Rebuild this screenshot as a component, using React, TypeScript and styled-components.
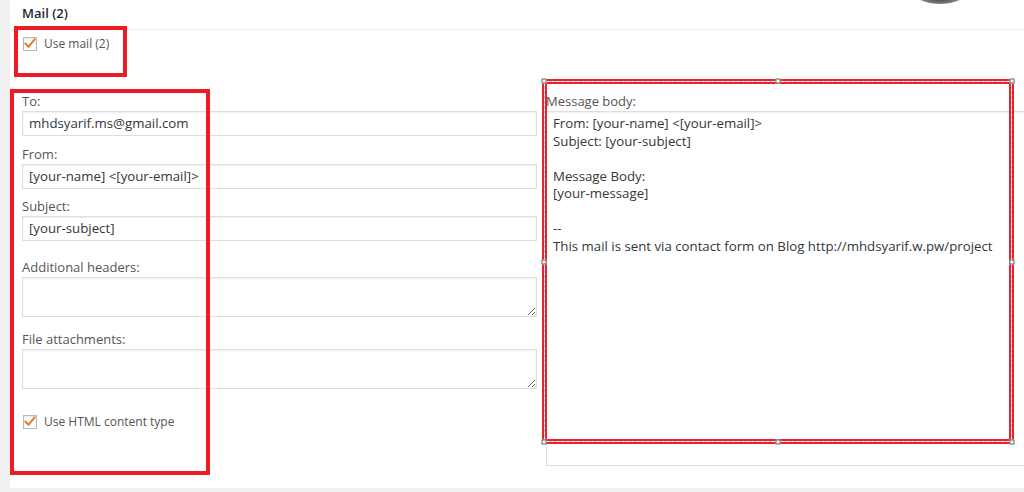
import React from "react";
import styled, { createGlobalStyle } from "styled-components";

const Global = createGlobalStyle`
  html, body { margin: 0; padding: 0; background: #f1f1f1; }
  body { width: 1024px; height: 492px; overflow: hidden; font-family: "Open Sans", "Liberation Sans", sans-serif; }
  * { box-sizing: border-box; }
`;

const Panel = styled.div`
  position: relative;
  margin-left: 10px;
  height: 488px;
  background: #fff;
  overflow: hidden;
`;

const Header = styled.h2`
  margin: 0;
  height: 30px;
  padding: 3px 0 0 12px;
  font-size: 13px;
  font-weight: 600;
  line-height: 20px;
  color: #23282d;
  border-bottom: 1px solid #eee;
`;

const Body = styled.div`
  padding: 7px 0 0 12px;
`;

const CheckRow = styled.label<{ $mt?: number }>`
  display: flex;
  align-items: center;
  gap: 7px;
  margin-top: ${(p) => p.$mt ?? 0}px;
  font-size: 12px;
  color: #555;
  line-height: 14px;
`;

const Box = styled.span`
  position: relative;
  width: 14px;
  height: 14px;
  border: 1px solid #b4b9be;
  background: #fff;
  box-shadow: inset 0 1px 2px rgba(0, 0, 0, 0.1);
  display: flex;
  align-items: center;
  justify-content: center;
  flex: none;
  margin-left: 1px;
`;

const Columns = styled.div`
  display: grid;
  grid-template-columns: 515px 1fr;
  column-gap: 9px;
  margin-top: 42px;
`;

const Col = styled.div`
  display: flex;
  flex-direction: column;
`;

const Field = styled.div<{ $mt?: number }>`
  display: flex;
  flex-direction: column;
  margin-top: ${(p) => p.$mt ?? 0}px;
`;

const Label = styled.span`
  display: block;
  font-size: 13px;
  line-height: 16px;
  color: #555;
  margin-bottom: 2px;
`;

const Input = styled.div`
  height: 25px;
  border: 1px solid #ddd;
  box-shadow: inset 0 1px 2px rgba(0, 0, 0, 0.07);
  padding: 0 6px;
  font-size: 13.25px;
  line-height: 22px;
  color: #32373c;
  white-space: nowrap;
`;

const Area = styled.textarea<{ $h: number }>`
  display: block;
  width: 100%;
  height: ${(p) => p.$h}px;
  margin: 0;
  border: 1px solid #ddd;
  box-shadow: inset 0 1px 2px rgba(0, 0, 0, 0.07);
  padding: 3px 6px;
  font-family: "Open Sans", "Liberation Sans", sans-serif;
  font-size: 13.25px;
  line-height: 17.5px;
  color: #32373c;
  resize: vertical;
  outline: none;
  background: #fff;
`;

const MessageArea = styled(Area)`
  width: calc(100% + 20px);
  resize: none;
  overflow: hidden;
`;

const RedBox = styled.div`
  position: absolute;
  border: 4px solid #ed1c24;
  pointer-events: none;
`;

const Selection = styled.div`
  position: absolute;
  left: 532px;
  top: 79px;
  width: 472px;
  height: 365px;
  border: 2px solid #e8232d;
  pointer-events: none;
`;

const SelDash = styled.div`
  position: absolute;
  inset: 0;
  border: 1px dashed #f7c3c6;
`;

const SelInner = styled.div`
  position: absolute;
  inset: 1px;
  border: 2px solid #e8232d;
`;

const Handle = styled.span`
  position: absolute;
  width: 5px;
  height: 5px;
  background: #fff;
  border: 1px solid #666;
  transform: translate(-50%, -50%);
`;

const Blob = styled.div`
  position: absolute;
  left: 903px;
  top: -22px;
  width: 54px;
  height: 26px;
  border-radius: 50%;
  background: radial-gradient(ellipse at 50% 40%, #3e3e3e 0%, #5a5a5a 55%, #aaa 85%, rgba(255,255,255,0) 100%);
`;

const Check = () => (
  <svg width="13" height="11" viewBox="0 0 13 11" style={{ marginTop: -2 }}>
    <path d="M1.5 5.5 L5 9 L11.5 1" fill="none" stroke="#e07a2e" strokeWidth="2.2" strokeLinecap="round" strokeLinejoin="round" />
  </svg>
);

const message = `From: [your-name] <[your-email]>
Subject: [your-subject]

Message Body:
[your-message]

--
This mail is sent via contact form on Blog http://mhdsyarif.w.pw/project`;

const handles: [string, string][] = [
  ["0%", "0%"], ["50%", "0%"], ["100%", "0%"],
  ["0%", "50%"], ["100%", "50%"],
  ["0%", "100%"], ["50%", "100%"], ["100%", "100%"],
];

export default function App() {
  return (
    <>
      <Global />
      <Panel>
        <Blob />
        <Header>Mail (2)</Header>
        <Body>
          <CheckRow>
            <Box><Check /></Box>
            Use mail (2)
          </CheckRow>
          <Columns>
            <Col>
              <Field>
                <Label>To:</Label>
                <Input>mhdsyarif.ms@gmail.com</Input>
              </Field>
              <Field $mt={10}>
                <Label>From:</Label>
                <Input>[your-name] &lt;[your-email]&gt;</Input>
              </Field>
              <Field $mt={9}>
                <Label>Subject:</Label>
                <Input>[your-subject]</Input>
              </Field>
              <Field $mt={18}>
                <Label>Additional headers:</Label>
                <Area $h={40} readOnly />
              </Field>
              <Field $mt={14}>
                <Label>File attachments:</Label>
                <Area $h={40} readOnly />
              </Field>
              <CheckRow $mt={26}>
                <Box><Check /></Box>
                Use HTML content type
              </CheckRow>
            </Col>
            <Col>
              <Field>
                <Label>Message body:</Label>
                <MessageArea $h={355} readOnly value={message} />
              </Field>
            </Col>
          </Columns>
        </Body>
        <RedBox style={{ left: 4, top: 26, width: 113, height: 51 }} />
        <RedBox style={{ left: 0, top: 89, width: 200, height: 386 }} />
        <Selection>
          <SelDash />
          <SelInner />
          {handles.map(([l, t], i) => (
            <Handle key={i} style={{ left: l, top: t }} />
          ))}
        </Selection>
      </Panel>
    </>
  );
}
